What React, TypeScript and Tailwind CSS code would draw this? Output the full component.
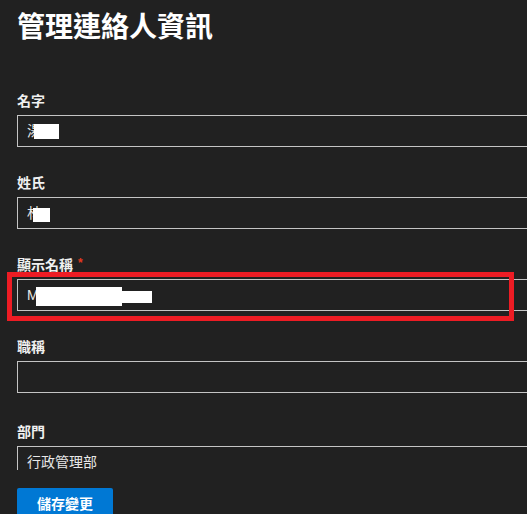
import React from 'react';

type Redact = { left: number; top: number; w: number; h: number };

interface FieldProps {
  label: string;
  value?: string;
  required?: boolean;
  redactions?: Redact[];
  highlight?: boolean;
  className?: string;
}

function Field({ label, value, required, redactions = [], highlight, className }: FieldProps) {
  return (
    <div className={className}>
      <div className="h-5 leading-5 text-[14px] font-semibold text-[#f0f0f0] flex items-start">
        {label}
        {required && <span className="ml-[5px] text-[12px] leading-4 text-[#e5391f]">*</span>}
      </div>
      <div className="relative mt-1">
        <div className="relative h-8 w-[540px] border border-[#c4c4c4] pl-[9px] flex items-center text-[14px] text-[#e8e8e8]">
          {value}
          {redactions.map((r, i) => (
            <span
              key={i}
              className="absolute bg-white"
              style={{ left: r.left, top: r.top - 1, width: r.w, height: r.h }}
            />
          ))}
        </div>
        {highlight && (
          <div className="absolute -left-[10px] -top-[7px] w-[507px] h-[49px] border-[5px] border-[#ed1c24]" />
        )}
      </div>
    </div>
  );
}

export default function App() {
  return (
    <div className="w-[527px] h-[514px] overflow-hidden bg-[#212121] font-['Liberation_Sans','Noto_Sans_CJK_TC',sans-serif]">
      <h1 className="pt-[10px] pl-[17px] h-[46px] text-[28px] leading-[36px] font-semibold text-white">
        管理連絡人資訊
      </h1>

      <div className="h-[424px] overflow-hidden pt-[45px] pl-[17px]">
        <Field label="名字" value="湯" redactions={[{ left: 16, top: 9, w: 25, h: 15 }]} />
        <Field
          className="mt-[26px]"
          label="姓氏"
          value="林"
          redactions={[{ left: 15, top: 11, w: 17, h: 14 }]}
        />
        <Field
          className="mt-[26px]"
          label="顯示名稱"
          required
          highlight
          value="M"
          redactions={[
            { left: 18, top: 8, w: 86, h: 19 },
            { left: 104, top: 12, w: 30, h: 12 },
          ]}
        />
        <Field className="mt-[26px]" label="職稱" />
        <Field className="mt-[29px]" label="部門" value="行政管理部" />
      </div>

      <div className="pt-[18px] pl-[17px]">
        <button className="w-[96px] h-[32px] rounded-[2px] bg-[#0078d4] text-white text-[14px] font-semibold">
          儲存變更
        </button>
      </div>
    </div>
  );
}
